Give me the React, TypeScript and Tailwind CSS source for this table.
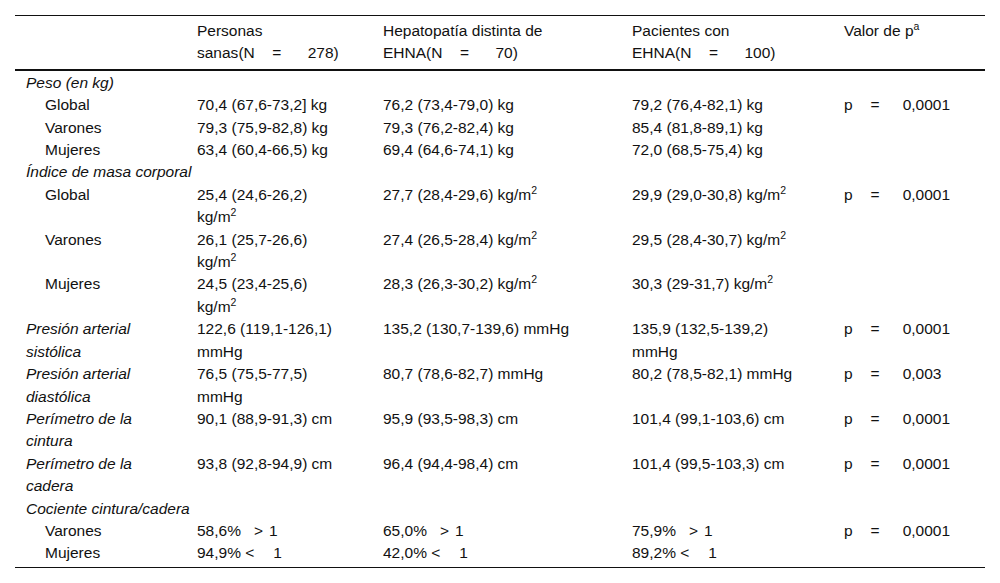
import React from 'react';

type Row = {
  label: React.ReactNode;
  kind: 'section' | 'sub' | 'main';
  cells?: React.ReactNode[];
};

const Sup = ({ children }: { children: React.ReactNode }) => (
  <span className="relative -top-[6px] text-[10.5px] leading-none">{children}</span>
);

const m2 = (
  <>
    kg/m<Sup>2</Sup>
  </>
);

const Lines = ({ lines }: { lines: React.ReactNode[] }) => (
  <>
    {lines.map((l, i) => (
      <span key={i} className="block whitespace-nowrap">
        {l}
      </span>
    ))}
  </>
);

// "p = 0,0001" con los espacios anchos del original
const P = ({ v }: { v: string }) => (
  <span className="whitespace-nowrap">
    p<span className="inline-block w-[45px] text-center">=</span>
    <span className="ml-[5px]">{v}</span>
  </span>
);

const Eq = ({ n }: { n: string }) => (
  <>
    (N<span className="inline-block w-[44px] text-center">=</span>
    <span className="ml-[9px]">{n})</span>
  </>
);

const Ratio = ({ pct, sign }: { pct: string; sign: '>' | '<' }) =>
  sign === '>' ? (
    <span className="whitespace-nowrap">
      {pct}
      <span className="ml-[13px]">&gt;</span>
      <span className="ml-[6px]">1</span>
    </span>
  ) : (
    <span className="whitespace-nowrap">
      {pct} &lt;<span className="ml-[19px]">1</span>
    </span>
  );

const rows: Row[] = [
  { label: 'Peso (en kg)', kind: 'section' },
  { label: 'Global', kind: 'sub', cells: ['70,4 (67,6-73,2] kg', '76,2 (73,4-79,0) kg', '79,2 (76,4-82,1) kg', <P v="0,0001" />] },
  { label: 'Varones', kind: 'sub', cells: ['79,3 (75,9-82,8) kg', '79,3 (76,2-82,4) kg', '85,4 (81,8-89,1) kg', ''] },
  { label: 'Mujeres', kind: 'sub', cells: ['63,4 (60,4-66,5) kg', '69,4 (64,6-74,1) kg', '72,0 (68,5-75,4) kg', ''] },
  { label: 'Índice de masa corporal', kind: 'section' },
  {
    label: 'Global',
    kind: 'sub',
    cells: [
      <Lines lines={['25,4 (24,6-26,2)', m2]} />,
      <>27,7 (28,4-29,6) {m2}</>,
      <>29,9 (29,0-30,8) {m2}</>,
      <P v="0,0001" />,
    ],
  },
  {
    label: 'Varones',
    kind: 'sub',
    cells: [<Lines lines={['26,1 (25,7-26,6)', m2]} />, <>27,4 (26,5-28,4) {m2}</>, <>29,5 (28,4-30,7) {m2}</>, ''],
  },
  {
    label: 'Mujeres',
    kind: 'sub',
    cells: [<Lines lines={['24,5 (23,4-25,6)', m2]} />, <>28,3 (26,3-30,2) {m2}</>, <>30,3 (29-31,7) {m2}</>, ''],
  },
  {
    label: <Lines lines={['Presión arterial', 'sistólica']} />,
    kind: 'main',
    cells: [
      <Lines lines={['122,6 (119,1-126,1)', 'mmHg']} />,
      '135,2 (130,7-139,6) mmHg',
      <Lines lines={['135,9 (132,5-139,2)', 'mmHg']} />,
      <P v="0,0001" />,
    ],
  },
  {
    label: <Lines lines={['Presión arterial', 'diastólica']} />,
    kind: 'main',
    cells: [<Lines lines={['76,5 (75,5-77,5)', 'mmHg']} />, '80,7 (78,6-82,7) mmHg', '80,2 (78,5-82,1) mmHg', <P v="0,003" />],
  },
  {
    label: <Lines lines={['Perímetro de la', 'cintura']} />,
    kind: 'main',
    cells: ['90,1 (88,9-91,3) cm', '95,9 (93,5-98,3) cm', '101,4 (99,1-103,6) cm', <P v="0,0001" />],
  },
  {
    label: <Lines lines={['Perímetro de la', 'cadera']} />,
    kind: 'main',
    cells: ['93,8 (92,8-94,9) cm', '96,4 (94,4-98,4) cm', '101,4 (99,5-103,3) cm', <P v="0,0001" />],
  },
  { label: 'Cociente cintura/cadera', kind: 'section' },
  {
    label: 'Varones',
    kind: 'sub',
    cells: [<Ratio pct="58,6%" sign=">" />, <Ratio pct="65,0%" sign=">" />, <Ratio pct="75,9%" sign=">" />, <P v="0,0001" />],
  },
  {
    label: 'Mujeres',
    kind: 'sub',
    cells: [<Ratio pct="94,9%" sign="<" />, <Ratio pct="42,0%" sign="<" />, <Ratio pct="89,2%" sign="<" />, ''],
  },
];

export default function App() {
  return (
    <div className="w-[1000px] h-[583px] bg-white pt-[15px] px-[15px] text-[15.5px] leading-[22.4px] text-[#111] font-['Liberation_Sans',Arial,sans-serif]">
      <table className="w-[970px] table-fixed border-collapse">
        <colgroup>
          <col className="w-[182px]" />
          <col className="w-[186px]" />
          <col className="w-[249px]" />
          <col className="w-[212px]" />
          <col className="w-[141px]" />
        </colgroup>
        <thead>
          <tr className="border-t border-[#111] border-b-2 border-b-[#111]">
            <th className="pt-[4px] pb-[4px]" />
            <th className="pt-[4px] pb-[4px] text-left align-top font-normal">
              <Lines lines={['Personas', <>sanas<Eq n="278" /></>]} />
            </th>
            <th className="pt-[4px] pb-[4px] text-left align-top font-normal">
              <Lines lines={['Hepatopatía distinta de', <>EHNA<Eq n="70" /></>]} />
            </th>
            <th className="pt-[4px] pb-[4px] text-left align-top font-normal">
              <Lines lines={['Pacientes con', <>EHNA<Eq n="100" /></>]} />
            </th>
            <th className="pt-[4px] pb-[4px] text-left align-top font-normal">
              Valor de p<Sup>a</Sup>
            </th>
          </tr>
        </thead>
        <tbody className="border-b border-[#111]">
          {rows.map((r, i) => {
            const last = i === rows.length - 1;
            if (r.kind === 'section') {
              return (
                <tr key={i}>
                  <td colSpan={5} className={`pl-[11px] italic whitespace-nowrap ${i === 0 ? 'pt-[1px]' : ''}`}>
                    {r.label}
                  </td>
                </tr>
              );
            }
            return (
              <tr key={i} className="align-top">
                <td className={`${r.kind === 'sub' ? 'pl-[30px]' : 'pl-[11px] italic'} ${last ? 'pb-[2px]' : ''}`}>{r.label}</td>
                {r.cells!.map((c, j) => (
                  <td key={j} className={`whitespace-nowrap ${last ? 'pb-[2px]' : ''}`}>
                    {c}
                  </td>
                ))}
              </tr>
            );
          })}
        </tbody>
      </table>
    </div>
  );
}
